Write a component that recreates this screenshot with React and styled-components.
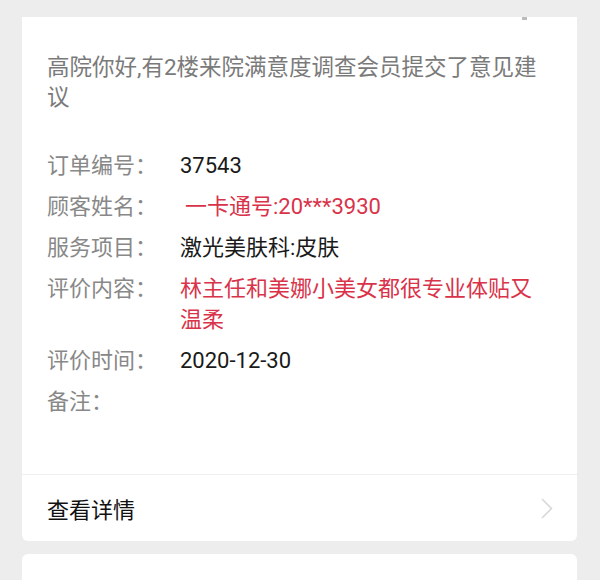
import React from "react";
import styled, { createGlobalStyle } from "styled-components";

const GlobalStyle = createGlobalStyle`
  html, body {
    margin: 0;
    padding: 0;
    background: #ededed;
  }
  body {
    font-family: Roboto, "Noto Sans CJK SC", sans-serif;
  }
`;

const Page = styled.div`
  width: 600px;
  height: 580px;
  overflow: hidden;
  padding: 17px 23px 0 22px;
  box-sizing: border-box;
  display: flex;
  flex-direction: column;
  gap: 13px;
`;

const Card = styled.section`
  position: relative;
  background: #fff;
  border-radius: ${(p) => (p.$open ? "0 0 6px 6px" : "6px")};
  min-height: ${(p) => (p.$filler ? "60px" : "auto")};
  flex-shrink: 0;
`;

const TopMark = styled.span`
  position: absolute;
  top: 0;
  right: 50px;
  width: 5px;
  height: 3px;
  background: #bbb;
`;

const Body = styled.div`
  padding: 35px 24px 57px 25px;
`;

const Notice = styled.p`
  margin: 0 0 38px;
  max-width: 500px;
  font-size: 22.5px;
  line-height: 30px;
  color: #7a7a7a;
`;

const Fields = styled.div`
  display: flex;
  flex-direction: column;
  gap: 10px;
`;

const Field = styled.div`
  display: flex;
  font-size: 22px;
  line-height: 31px;
`;

const Label = styled.span`
  flex: 0 0 133px;
  color: #888;
`;

const Value = styled.span`
  max-width: 362px;
  color: ${(p) => (p.$red ? "#d9334a" : "#1a1a1a")};
  padding-left: ${(p) => (p.$indent ? "5px" : "0")};
`;

const Footer = styled.div`
  border-top: 1px solid #efefef;
  height: 66px;
  padding: 0 24px 0 25px;
  display: flex;
  align-items: center;
  justify-content: space-between;
  font-size: 22px;
  color: #111;
`;

const Chevron = () => (
  <svg width="12" height="21" viewBox="0 0 12 21" fill="none">
    <path d="M1 1l9.5 9.5L1 20" stroke="#d6d6d6" strokeWidth="1.5" />
  </svg>
);

const fields = [
  { label: "订单编号：", value: "37543" },
  { label: "顾客姓名：", value: "一卡通号:20***3930", red: true, indent: true },
  { label: "服务项目：", value: "激光美肤科:皮肤" },
  { label: "评价内容：", value: "林主任和美娜小美女都很专业体贴又温柔", red: true },
  { label: "评价时间：", value: "2020-12-30" },
  { label: "备注：", value: "" },
];

export default function App() {
  return (
    <>
      <GlobalStyle />
      <Page>
        <Card $open>
          <TopMark />
          <Body>
            <Notice>高院你好,有2楼来院满意度调查会员提交了意见建议</Notice>
            <Fields>
              {fields.map((f) => (
                <Field key={f.label}>
                  <Label>{f.label}</Label>
                  <Value $red={f.red} $indent={f.indent}>
                    {f.value}
                  </Value>
                </Field>
              ))}
            </Fields>
          </Body>
          <Footer>
            <span>查看详情</span>
            <Chevron />
          </Footer>
        </Card>
        <Card $filler />
      </Page>
    </>
  );
}
